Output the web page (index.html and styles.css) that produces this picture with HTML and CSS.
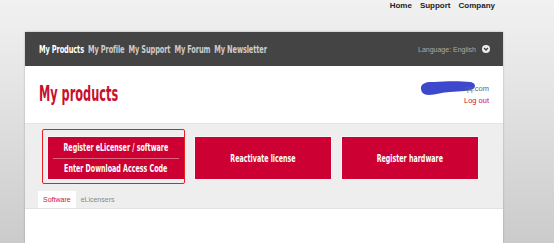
FILE: index.html
```html
<!DOCTYPE html>
<html lang="en">
<head>
  <meta charset="UTF-8">
  <title>My products</title>
  <link rel="stylesheet" href="styles.css">
</head>
<body>
  <div class="top-links">
    <a href="#">Home</a>
    <a href="#">Support</a>
    <a href="#">Company</a>
  </div>

  <div class="panel">
    <div class="navbar">
      <nav class="nav-links">
        <a href="#" class="active">My Products</a>
        <a href="#">My Profile</a>
        <a href="#">My Support</a>
        <a href="#">My Forum</a>
        <a href="#">My Newsletter</a>
      </nav>
      <div class="language">
        Language: English
        <svg class="lang-icon" width="8" height="8" viewBox="0 0 10 10">
          <circle cx="5" cy="5" r="5" fill="#ededed"/>
          <path d="M2.6 3.8 L5 6.2 L7.4 3.8" stroke="#444" stroke-width="1.8" fill="none"/>
        </svg>
      </div>
    </div>

    <div class="header">
      <h1>My products</h1>
      <div class="account">
        <div class="email">
          <svg class="scribble" width="56" height="14" viewBox="0 0 56 14">
            <path d="M1 7 C1 2 7 0.5 14 1 C26 0 42 0 50 1 C55 1.5 56 5 54 7.5 C50 10 40 10.5 30 11 C22 11.5 16 13.5 9 14 C3 14 1 11 1 7 Z" fill="#3d48cc"/>
          </svg>
          <span>qq.com</span>
        </div>
        <a href="#" class="logout">Log out</a>
      </div>
    </div>

    <div class="actions">
      <div class="highlight">
        <div class="btn btn-split">
          <a href="#"><span>Register eLicenser / software</span></a>
          <a href="#"><span>Enter Download Access Code</span></a>
        </div>
      </div>
      <a href="#" class="btn"><span>Reactivate license</span></a>
      <a href="#" class="btn"><span>Register hardware</span></a>
    </div>

    <div class="tabs">
      <a href="#" class="tab active">Software</a>
      <a href="#" class="tab">eLicensers</a>
    </div>

    <div class="content"></div>
  </div>
</body>
</html>
```

FILE: styles.css
```css
body {
  margin: 0;
  height: 243px;
  overflow: hidden;
  font-family: "Liberation Sans", Arial, sans-serif;
  background: linear-gradient(#f1f1f1, #e4e4e4 90px, #cbcbcb 243px);
}

a {
  text-decoration: none;
}

.top-links {
  display: flex;
  justify-content: flex-end;
  gap: 8px;
  padding: 1px 59px 0 0;
  height: 31px;
  font-size: 8px;
  font-weight: bold;
}

.top-links a {
  color: #222;
  line-height: 10px;
}

.panel {
  margin-left: 25px;
  width: 478px;
  height: 211px;
  background: #fff;
  box-shadow: 0 0 2px rgba(0, 0, 0, .25);
}

.navbar {
  display: flex;
  align-items: center;
  justify-content: space-between;
  height: 34px;
  background: #444;
  padding: 0 13px 0 14px;
}

/* the original face is a very narrow display font, squeeze a condensed one */
.nav-links {
  display: flex;
  gap: 6px;
  transform: scaleX(.67);
  transform-origin: left center;
}

.nav-links a {
  font-family: "DejaVu Sans Condensed", "Liberation Sans Narrow", sans-serif;
  font-stretch: condensed;
  font-weight: bold;
  font-size: 11px;
  color: #ccc;
  letter-spacing: -0.2px;
}

.nav-links a.active {
  color: #fff;
}

.language {
  display: flex;
  align-items: center;
  gap: 6px;
  font-size: 7px;
  color: #aaa;
}

.header {
  display: flex;
  justify-content: space-between;
  height: 57px;
  padding: 0 14px;
}

h1 {
  margin: 16px 0 0;
  font-family: "DejaVu Sans Condensed", "Liberation Sans Narrow", sans-serif;
  font-stretch: condensed;
  font-weight: bold;
  font-size: 21px;
  color: #c8102e;
  transform: scaleX(.6);
  transform-origin: left center;
}

.account {
  margin-top: 15px;
  text-align: right;
  font-size: 7.5px;
}

.email {
  display: flex;
  align-items: center;
  justify-content: flex-end;
  color: #666;
  height: 14px;
}

.scribble {
  flex-shrink: 0;
  margin-right: -12px;
}

.logout {
  display: block;
  margin-top: 1px;
  color: #d0103a;
}

.actions {
  display: flex;
  gap: 11px;
  background: #eee;
  border-top: 1px solid #e4e4e4;
  padding: 13px 0 12px 23px;
}

.highlight {
  position: relative;
  display: flex;
}

.highlight::before {
  content: "";
  position: absolute;
  left: -6px;
  top: -8px;
  right: -1px;
  bottom: -5px;
  border: 1.5px solid #ea1c24;
  border-radius: 2px;
}

.btn {
  display: flex;
  align-items: center;
  justify-content: center;
  width: 136px;
  height: 42px;
  background: #cc0033;
  box-shadow: 0 0 0 1px #f6f6f6;
  color: #fff;
  font-family: "DejaVu Sans Condensed", "Liberation Sans Narrow", sans-serif;
  font-stretch: condensed;
  font-weight: bold;
  font-size: 11px;
}

.btn span {
  display: inline-block;
  white-space: nowrap;
  transform: scaleX(.64);
}

.btn-split {
  flex-direction: column;
  align-items: stretch;
}

.btn-split a {
  flex: 1;
  display: flex;
  align-items: center;
  justify-content: center;
  color: #fff;
  margin: 0 5px;
}

.btn-split a + a {
  border-top: 1px solid #e0667f;
}

.tabs {
  display: flex;
  background: #eee;
  padding-left: 13px;
  border-bottom: 1px solid #e2e2e2;
}

.tab {
  padding: 5px 5px 5px;
  font-size: 7px;
  color: #888;
}

.tab.active {
  background: #fff;
  color: #d0103a;
}
```
